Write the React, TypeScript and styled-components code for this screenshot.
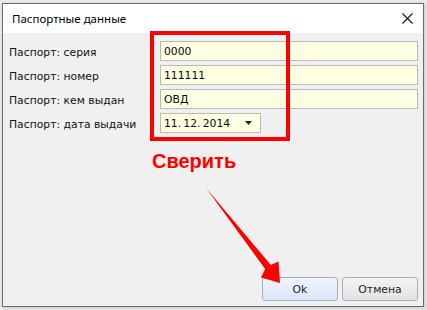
import styled, { createGlobalStyle } from "styled-components";

const GlobalStyle = createGlobalStyle`
  html, body {
    margin: 0;
    padding: 0;
    background: #e9e9e9;
  }
`;

const fields = [
  { label: "Паспорт: серия", value: "0000" },
  { label: "Паспорт: номер", value: "111111" },
  { label: "Паспорт: кем выдан", value: "ОВД" },
];

const App = () => {
  return (
    <>
      <GlobalStyle />
      <Screen>
        <Window>
          <TitleBar>
            <TitleText>Паспортные данные</TitleText>
            <CloseButton>
              <svg width="11" height="11" viewBox="0 0 11 11">
                <path d="M0.5 0.5 L10.5 10.5 M10.5 0.5 L0.5 10.5" stroke="#111" strokeWidth="1.1" />
              </svg>
            </CloseButton>
          </TitleBar>
          <Body>
            <Form>
              {fields.map((f) => (
                <Row key={f.label}>
                  <Label>{f.label}</Label>
                  <Input>{f.value}</Input>
                </Row>
              ))}
              <Row>
                <Label>Паспорт: дата выдачи</Label>
                <DateInput>
                  <span>{"11.\u200912.\u20092014"}</span>
                  <svg width="7" height="4" viewBox="0 0 7 4">
                    <path d="M0 0 L7 0 L3.5 4 Z" fill="#222" />
                  </svg>
                </DateInput>
              </Row>
            </Form>
            <Buttons>
              <Button $primary>Ok</Button>
              <Button>Отмена</Button>
            </Buttons>
          </Body>
        </Window>

        <Highlight />
        <Note>Сверить</Note>
        <Arrow width="427" height="310" viewBox="0 0 427 310">
          <path
            d="M206 188 L270.8 264.9 L278.5 261.5 L280 283 L261 277.5 L265.2 269.1 Z"
            fill="#ff0000"
          />
        </Arrow>
      </Screen>
    </>
  );
};

const Screen = styled.div`
  position: relative;
  width: 427px;
  height: 310px;
  overflow: hidden;
  padding: 3px 0 0 2px;
  box-sizing: border-box;
`;

const Window = styled.div`
  width: 422px;
  height: 304px;
  box-sizing: border-box;
  border: 1px solid #6b6b6b;
  background: #f0f0f0;
  display: flex;
  flex-direction: column;
  box-shadow: 1px 1px 3px rgba(0, 0, 0, 0.15);
`;

const TitleBar = styled.div`
  height: 29px;
  background: #ffffff;
  display: flex;
  align-items: center;
  justify-content: space-between;
  padding: 0 9px 0 9px;
  flex-shrink: 0;
`;

const TitleText = styled.span`
  font-family: "Noto Sans", "Open Sans", sans-serif;
  font-size: 11.5px;
  color: #000;
`;

const CloseButton = styled.div`
  display: flex;
  align-items: center;
  margin-right: 1px;
`;

const Body = styled.div`
  flex: 1;
  display: flex;
  flex-direction: column;
  padding: 8px 5px 5px 3px;
`;

const Form = styled.div`
  display: flex;
  flex-direction: column;
  gap: 4px;
`;

const Row = styled.div`
  display: grid;
  grid-template-columns: 154px 1fr;
  align-items: center;
  height: 20px;
`;

const Label = styled.span`
  font-family: "DejaVu Sans", Tahoma, sans-serif;
  font-size: 10.8px;
  color: #111;
  padding-left: 3px;
  padding-top: 2px;
`;

const Input = styled.div`
  height: 20px;
  box-sizing: border-box;
  border: 1px solid #b9b9b9;
  background: #ffffe1;
  font-family: "DejaVu Sans", Tahoma, sans-serif;
  font-size: 10.8px;
  color: #0a0a14;
  display: flex;
  align-items: center;
  padding-left: 3px;
`;

const DateInput = styled(Input)`
  width: 101px;
  justify-content: space-between;
  padding-right: 8px;
`;

const Buttons = styled.div`
  margin-top: auto;
  display: flex;
  justify-content: flex-end;
  gap: 4px;
`;

const Button = styled.div<{ $primary?: boolean }>`
  width: 76px;
  height: 24px;
  box-sizing: border-box;
  border-radius: 3px;
  border: 1px solid ${(p) => (p.$primary ? "#a3aec4" : "#adadad")};
  background: ${(p) =>
    p.$primary
      ? "linear-gradient(#eef4fe, #dbe6fa)"
      : "linear-gradient(#f4f4f4, #e3e3e3)"};
  display: flex;
  align-items: center;
  justify-content: center;
  font-family: "DejaVu Sans", Tahoma, sans-serif;
  font-size: 10.8px;
  color: #1a1a2a;
`;

const Highlight = styled.div`
  position: absolute;
  left: 150px;
  top: 31px;
  width: 140px;
  height: 110px;
  box-sizing: border-box;
  border: 4px solid #ff0000;
`;

const Note = styled.div`
  position: absolute;
  left: 152px;
  top: 151px;
  font-family: "Liberation Sans", Arial, sans-serif;
  font-weight: bold;
  font-size: 20px;
  line-height: 20px;
  color: #ff0000;
`;

const Arrow = styled.svg`
  position: absolute;
  left: 0;
  top: 0;
  pointer-events: none;
`;

export default App;
